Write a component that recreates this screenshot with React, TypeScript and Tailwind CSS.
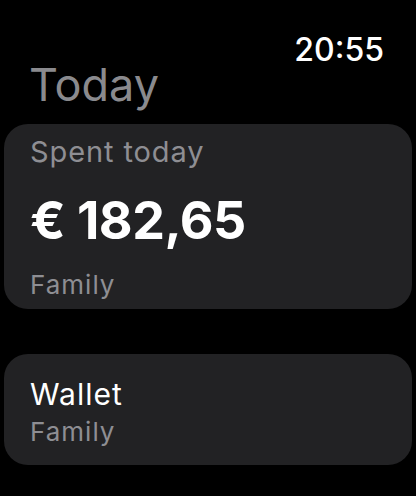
import React from 'react';

const App: React.FC = () => {
  return (
    <div className="w-[416px] h-[496px] bg-black overflow-hidden text-white font-['Inter',sans-serif] flex flex-col">
      {/* Status */}
      <div className="pt-[34px] pr-[32px] flex justify-end">
        <span className="text-[32px] leading-[32px] font-medium">20:55</span>
      </div>
      <div className="pl-[29px] text-[45px] leading-[38px] text-[#8a8a8e]">Today</div>

      {/* Spent card */}
      <div className="mx-[4px] mt-[20px] rounded-[24px] bg-[#222224] pl-[26px] pt-[12px] pb-[9px] flex flex-col">
        <div className="text-[29px] leading-[32px] tracking-[0.9px] text-[#8e8e93]">Spent today</div>
        <div className="mt-[25px] text-[52px] leading-[56px] font-bold tracking-[-0.5px]">€ 182,65</div>
        <div className="mt-[21px] text-[26px] leading-[30px] tracking-[1px] text-[#8e8e93]">Family</div>
      </div>

      {/* Wallet card */}
      <div className="mx-[4px] mt-[45px] rounded-[24px] bg-[#222224] pl-[26px] pt-[23px] pb-[18px] flex flex-col">
        <div className="text-[30px] leading-[34px] tracking-[1px]">Wallet</div>
        <div className="mt-[6px] text-[26px] leading-[30px] tracking-[1px] text-[#8e8e93]">Family</div>
      </div>
    </div>
  );
};

export default App;
